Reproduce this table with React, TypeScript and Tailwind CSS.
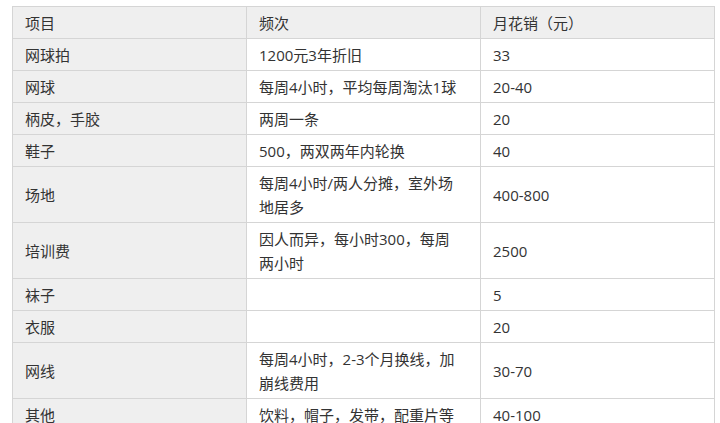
import React from 'react';

type Row = {
  item: string;
  freq: React.ReactNode;
  cost: string;
};

const rows: Row[] = [
  { item: '网球拍', freq: '1200元3年折旧', cost: '33' },
  { item: '网球', freq: '每周4小时，平均每周淘汰1球', cost: '20-40' },
  { item: '柄皮，手胶', freq: '两周一条', cost: '20' },
  { item: '鞋子', freq: '500，两双两年内轮换', cost: '40' },
  {
    item: '场地',
    freq: (
      <>
        每周4小时/两人分摊，室外场
        <br />
        地居多
      </>
    ),
    cost: '400-800',
  },
  {
    item: '培训费',
    freq: (
      <>
        因人而异，每小时300，每周
        <br />
        两小时
      </>
    ),
    cost: '2500',
  },
  { item: '袜子', freq: '', cost: '5' },
  { item: '衣服', freq: '', cost: '20' },
  {
    item: '网线',
    freq: (
      <>
        每周4小时，2-3个月换线，加
        <br />
        崩线费用
      </>
    ),
    cost: '30-70',
  },
  { item: '其他', freq: '饮料，帽子，发带，配重片等', cost: '40-100' },
];

const cell = 'border border-[#d5d5d5] pl-3 pr-2 pt-1 pb-[3px] align-middle text-left font-normal';

export default function App() {
  return (
    <div className="w-[720px] h-[423px] overflow-hidden bg-white">
      <div className="pl-3 pt-[6px]">
        <table
          className="w-[702px] table-fixed border-collapse text-[15px] leading-6 text-[#333333]"
          style={{ fontFamily: '"Open Sans", "Noto Sans CJK SC", sans-serif' }}
        >
          <colgroup>
            <col className="w-[234px]" />
            <col className="w-[234px]" />
            <col className="w-[234px]" />
          </colgroup>
          <thead>
            <tr className="bg-[#efefef]">
              <th className={cell}>项目</th>
              <th className={cell}>频次</th>
              <th className={cell}>月花销（元）</th>
            </tr>
          </thead>
          <tbody>
            {rows.map((r, i) => (
              <tr key={i}>
                <td className={`${cell} bg-[#efefef]`}>{r.item}</td>
                <td className={`${cell} bg-white`}>{r.freq}</td>
                <td className={`${cell} bg-white`}>{r.cost}</td>
              </tr>
            ))}
          </tbody>
        </table>
      </div>
    </div>
  );
}
